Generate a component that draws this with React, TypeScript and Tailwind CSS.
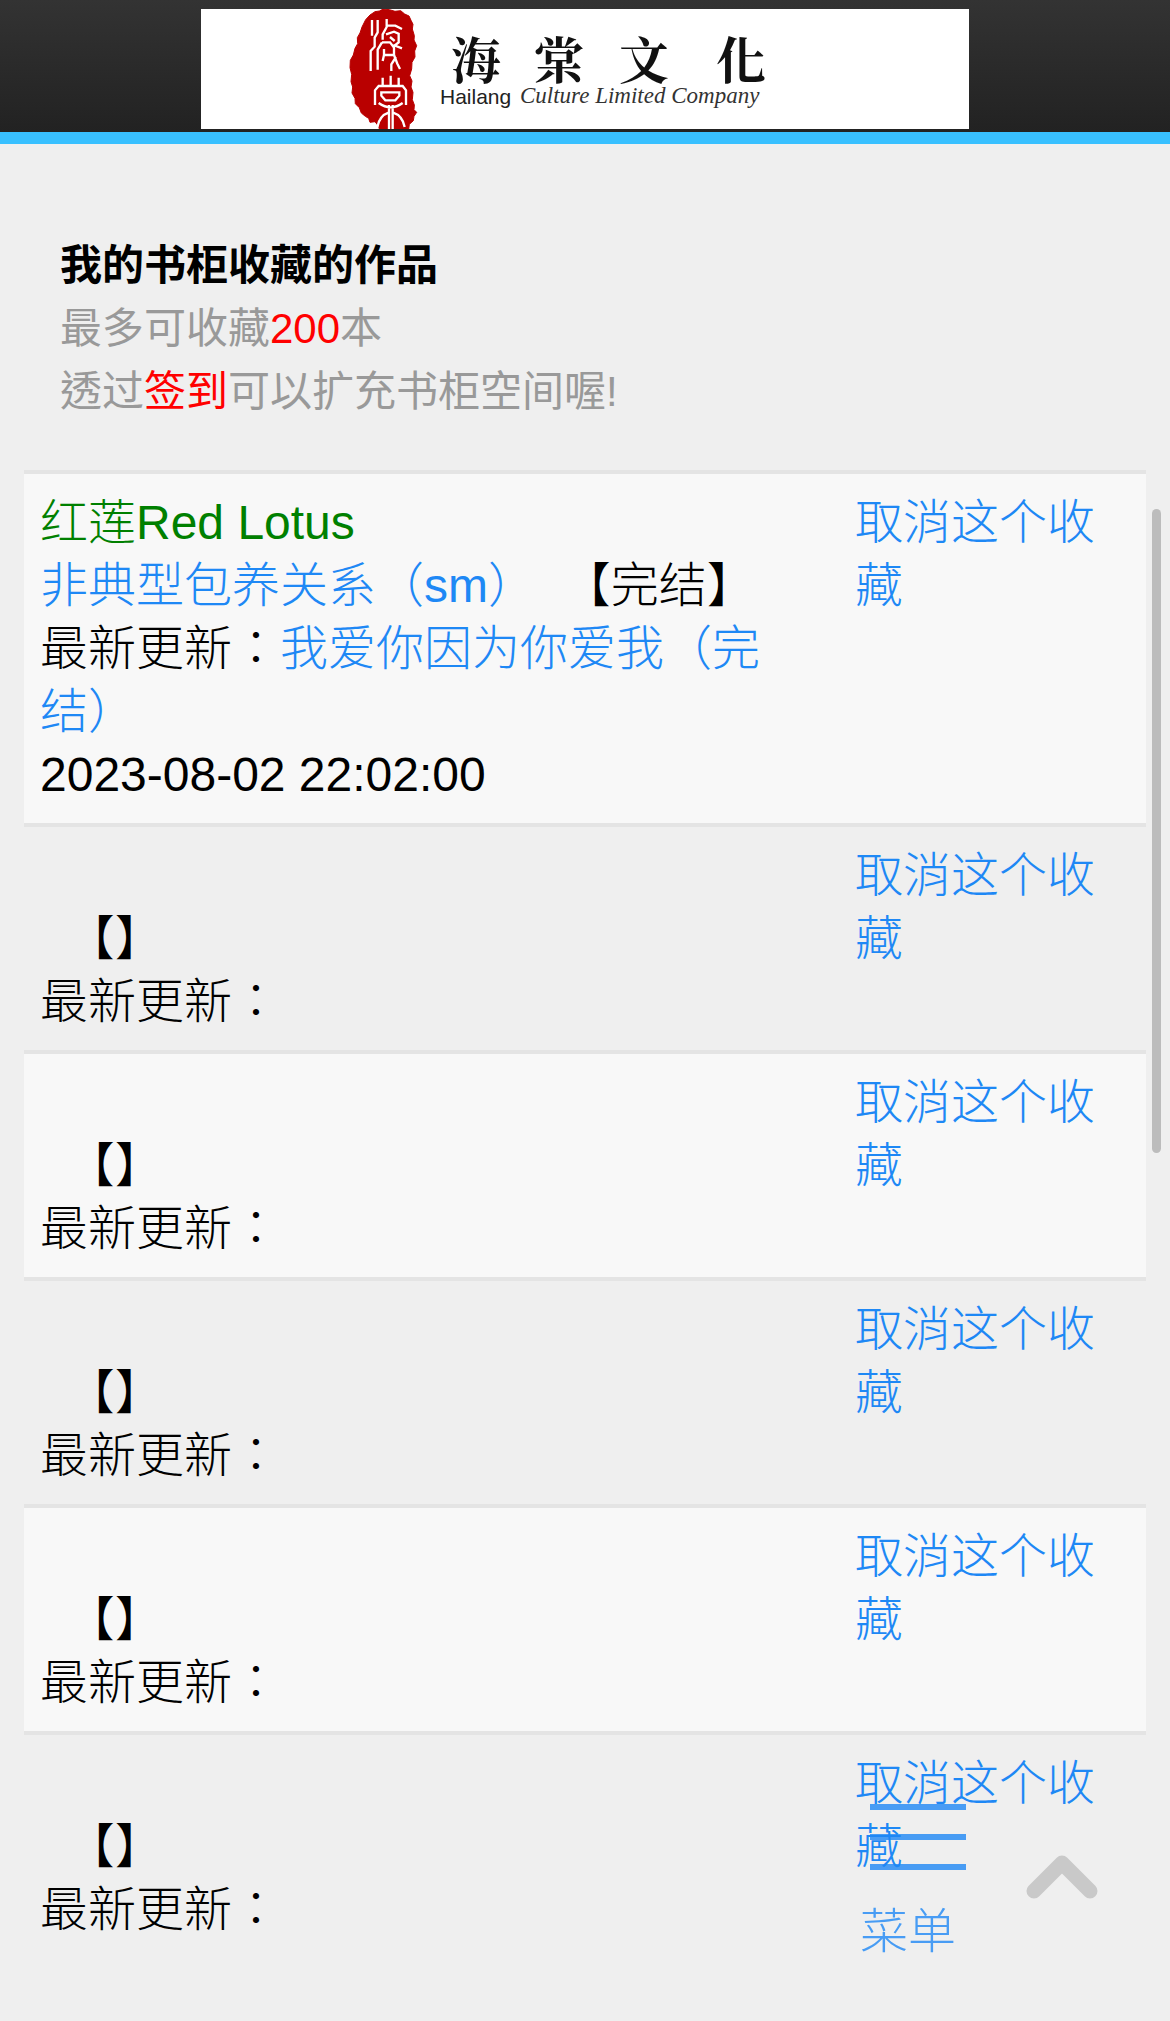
const BOOKS = [
  {
    id: 1,
    author: '红莲Red Lotus',
    title: '非典型包养关系（sm）',
    status: '完结',
    chapter: '我爱你因为你爱我（完结）',
    updated: '2023-08-02 22:02:00',
  },
  { id: 2 },
  { id: 3 },
  { id: 4 },
  { id: 5 },
  { id: 6 },
];

type Book = {
  id: number;
  author?: string;
  title?: string;
  status?: string;
  chapter?: string;
  updated?: string;
};

const LINK = 'text-[#1e88f5]';

function Logo() {
  return (
    <svg viewBox="0 0 768 120" className="block w-full bg-white" role="img" aria-label="海棠文化">
      {/* red seal */}
      <svg x="139" y="-4" width="90" height="128" viewBox="0 0 270 384">
        <path
          d="M105 20 L118 18 L130 12 L148 14 L165 19 L182 17 L194 27 L207 33 L213 46 L219 58 L217 72 L223 92 L222 105 L230 122 L224 138 L225 156 L216 172 L215 192 L209 212 L216 228 L213 246 L219 262 L217 284 L223 300 L222 314 L230 322 L222 334 L220 347 L208 358 L205 380 L120 380 L116 364 L105 350 L90 352 L86 340 L76 334 L64 324 L58 308 L46 296 L45 280 L36 264 L38 246 L33 230 L35 208 L30 188 L31 166 L40 150 L45 130 L53 116 L52 98 L60 84 L66 66 L77 44 L90 30 Z"
          fill="#b90000"
          stroke="#b90000"
          strokeWidth="3"
          strokeLinejoin="round"
        />
        <g fill="none" stroke="#fff" strokeWidth="7">
          <path d="M96 45 V92 M113 45 V82 L104 98 V125 L92 138 V198 M113 194 V134 L126 112" />
          <path d="M140 42 V66 L128 88 V104 M141 62 H166 L186 72 M138 88 L162 80 L176 86 V112 L158 126 M150 96 L164 108 M126 112 H150 L162 128 V150 H132 V132 M160 120 L186 130 M162 150 L172 176 L180 192 M168 156 L154 178 V198 M132 150 L128 168" />
          <path d="M152 212 V242 M128 218 V242 M176 218 V242 M105 300 V256 L116 243 H188 L198 256 V300" />
          <path d="M124 262 H178 V272 L166 286 H136 L124 272 Z" />
          <path d="M116 294 Q152 320 188 294 M147 300 V384 M158 300 V384 M147 322 Q118 332 112 366 M158 322 Q188 332 194 366" />
        </g>
      </svg>
      <g className="font-['Noto_Serif_CJK_TC','Noto_Sans_CJK_TC',serif]" fontWeight="700" fontSize="50" fill="#111">
        <text x="250" y="70">海</text>
        <text x="333" y="70">棠</text>
        <text x="418" y="70">文</text>
        <text x="515" y="70">化</text>
      </g>
      <text x="239" y="95" fontSize="21" fill="#222" className="font-['Liberation_Sans',sans-serif]">Hailang</text>
      <text x="319" y="94" fontSize="23" fontStyle="italic" fill="#333" className="font-['Liberation_Serif',serif]">
        Culture Limited Company
      </text>
    </svg>
  );
}

function BookRow({ book }: { book: Book }) {
  return (
    <tr className="border-t-4 border-[#e4e4e4] odd:bg-[#f8f8f8]">
      <td className="px-4 py-[17px] align-top">
        <span className="text-[#008000]">{book.author}</span>
        <br />
        {book.title && <a href="#book" className={LINK}>{book.title}</a>}
        &nbsp;&nbsp;【{book.status}】
        <br />
        最新更新：
        {book.chapter && <a href="#chapter" className={LINK}>{book.chapter}</a>}
        {book.updated && (
          <>
            <br />
            {book.updated}
          </>
        )}
      </td>
      <td className="w-[307px] px-4 py-[17px] align-top">
        <a href="#remove" className={LINK}>取消这个收藏</a>
      </td>
    </tr>
  );
}

export default function App() {
  return (
    <div className="min-h-screen bg-[#efefef] font-['Liberation_Sans','Noto_Sans_CJK_TC',sans-serif] text-black">
      <header className="border-b-12 border-[#38c0ff] bg-linear-to-b from-[#333] to-[#222] pt-[9px] pb-[3px]">
        <a href="#home" className="mx-auto block max-w-3xl">
          <Logo />
        </a>
      </header>

      <main className="px-6 pt-[90px]">
        <section className="px-9 pb-[47px] text-[42px] leading-[63px] text-[#999]">
          <h1 className="font-bold text-black">我的书柜收藏的作品</h1>
          <p>
            最多可收藏<span className="text-[#f00]">200</span>本
          </p>
          <p>
            透过<a href="#checkin" className="text-[#f00]">签到</a>可以扩充书柜空间喔!
          </p>
        </section>

        <table className="w-full table-auto border-collapse text-5xl leading-[63px] font-light">
          <tbody>
            {BOOKS.map((book) => (
              <BookRow key={book.id} book={book} />
            ))}
          </tbody>
        </table>
      </main>

      {/* floating menu */}
      <button className="fixed right-[204px] bottom-[58px] text-5xl leading-[63px] font-light text-[#1e88f5] opacity-80">
        <svg viewBox="0 0 96 66" className="mb-[30px] ml-[10px] h-[66px] w-24" fill="currentColor" aria-hidden="true">
          <rect width="96" height="6" />
          <rect y="30" width="96" height="6" />
          <rect y="60" width="96" height="6" />
        </svg>
        <span className="block text-left">菜单</span>
      </button>

      <button aria-label="Top" className="fixed right-[72px] bottom-[122px]">
        <svg viewBox="0 0 72 44" className="block h-11 w-[72px]" fill="none" stroke="#c9c9c9" strokeWidth="15" strokeLinecap="round" strokeLinejoin="round">
          <path d="M8 36 L36 8 L64 36" />
        </svg>
      </button>

      <div className="fixed top-[509px] right-[9px] h-[644px] w-[9px] rounded-full bg-[#bcbcbc]" />
    </div>
  );
}
